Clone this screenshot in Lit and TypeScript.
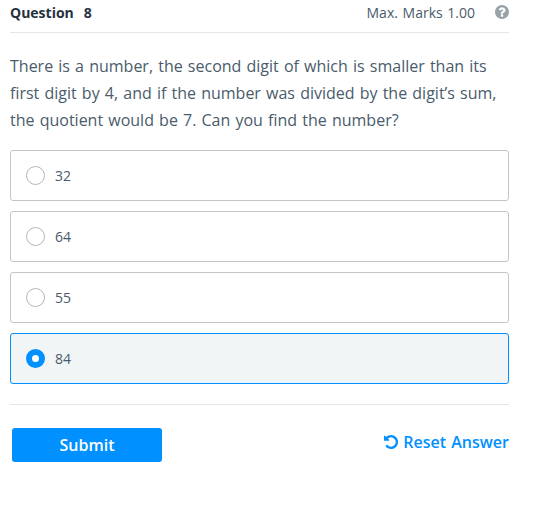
import { LitElement, html, css } from "lit";
import { customElement, state } from "lit/decorators.js";
import { classMap } from "lit/directives/class-map.js";

@customElement("app-root")
export class AppRoot extends LitElement {
  @state() private selected = 3;
  private options = ["32", "64", "55", "84"];

  static styles = css`
    :host {
      display: block;
      box-sizing: border-box;
      width: 533px;
      height: 509px;
      overflow: hidden;
      padding: 0 24px 0 10px;
      background: #fff;
      color: #4a5b6b;
      font-family: "Open Sans", sans-serif;
      word-spacing: 1px;
    }
    * { box-sizing: border-box; }
    header {
      display: flex;
      align-items: center;
      height: 33px;
      padding-bottom: 7px;
      border-bottom: 1px solid #e3e5e7;
      font-size: 14px;
      line-height: 20px;
    }
    .title { font-weight: 700; color: #26323e; }
    .number { margin-left: 10px; }
    .marks { margin-left: auto; }
    .help { width: 14px; height: 14px; margin: 0 0 1px 20px; display: block; fill: #98a2a9; }
    .question { margin: 20px 0 16px; font-size: 16px; line-height: 27px; white-space: nowrap; }
    .question span { display: block; }
    .options { display: grid; gap: 10px; }
    .option {
      display: flex;
      align-items: center;
      gap: 10px;
      height: 51px;
      padding-left: 15px;
      border: 1px solid #c1c6c9;
      border-radius: 3px;
      font-size: 14px;
    }
    .option.on { background: #f1f5f6; border-color: #0090ff; }
    .radio { width: 19px; height: 19px; border: 1px solid #b3b6b8; border-radius: 50%; background: #fff; }
    .on .radio { border: 6px solid #0090ff; }
    footer {
      display: flex;
      justify-content: space-between;
      margin-top: 20px;
      padding: 23px 0 0 2px;
      border-top: 1px solid #e3e5e7;
    }
    button { font: inherit; word-spacing: inherit; border: 0; padding: 0; cursor: pointer; font-weight: 600; font-size: 16px; }
    .submit { width: 150px; height: 34px; border-radius: 3px; background: #0090ff; color: #fff; }
    .reset { display: flex; align-items: center; gap: 5px; height: 28px; background: none; color: #0090ff; }
    .reset svg { width: 14px; height: 14px; fill: currentColor; }
  `;

  render() {
    return html`
      <header>
        <span class="title">Question</span>
        <span class="title number">8</span>
        <span class="marks">Max. Marks 1.00</span>
        <svg class="help" viewBox="128 128 1536 1536"><path d="M1024 1376v-192q0-14-9-23t-23-9h-192q-14 0-23 9t-9 23v192q0 14 9 23t23 9h192q14 0 23-9t9-23zm256-672q0-88-55.5-163t-138.5-116-170-41q-243 0-371 213-15 24 8 42l132 100q7 6 19 6 16 0 25-12 53-68 86-92 34-24 86-24 48 0 85.5 26t37.5 59q0 38-20 61t-68 45q-63 28-115.500 86.500t-52.500 125.500v36q0 14 9 23t23 9h192q14 0 23-9t9-23q0-19 21.500-49.500t54.500-49.500q32-18 49-28.500t46-35 44.500-48 28-60.500 12.500-81zm384 192q0 209-103 385.500t-279.500 279.500-385.500 103-385.500-103-279.500-279.500-103-385.500 103-385.500 279.500-279.500 385.500-103 385.500 103 279.500 279.500 103 385.500z"/></svg>
      </header>
      <div class="question">
        <span>There is a number, the second digit of which is smaller than its</span>
        <span>first digit by 4, and if the number was divided by the digit’s sum,</span>
        <span>the quotient would be 7. Can you find the number?</span>
      </div>
      <div class="options">
        ${this.options.map((o, i) => html`
          <div class=${classMap({ option: true, on: i === this.selected })} @click=${() => (this.selected = i)}>
            <span class="radio"></span><span>${o}</span>
          </div>`)}
      </div>
      <footer>
        <button class="submit">Submit</button>
        <button class="reset" @click=${() => (this.selected = -1)}>
          <svg viewBox="0 -128 1536 1536"><path d="M1536 640q0 156-61 298t-164 245-245 164-298 61q-172 0-327-72.500t-264-204.500q-7-10-6.500-22.500t8.500-20.500l137-138q10-9 25-9 16 2 23 12 73 95 179 147t225 52q104 0 198.500-40.500t163.500-109.500 109.500-163.500 40.500-198.500-40.500-198.500-109.500-163.500-163.500-109.500-198.500-40.500q-98 0-188 35.500t-160 101.500l137 138q31 30 14 69-17 40-59 40h-448q-26 0-45-19t-19-45v-448q0-42 40-59 39-17 69 14l130 129q107-101 244.500-156.500t284.500-55.500q156 0 298 61t245 164 164 245 61 298z"/></svg>
          <span>Reset Answer</span>
        </button>
      </footer>`;
  }
}
